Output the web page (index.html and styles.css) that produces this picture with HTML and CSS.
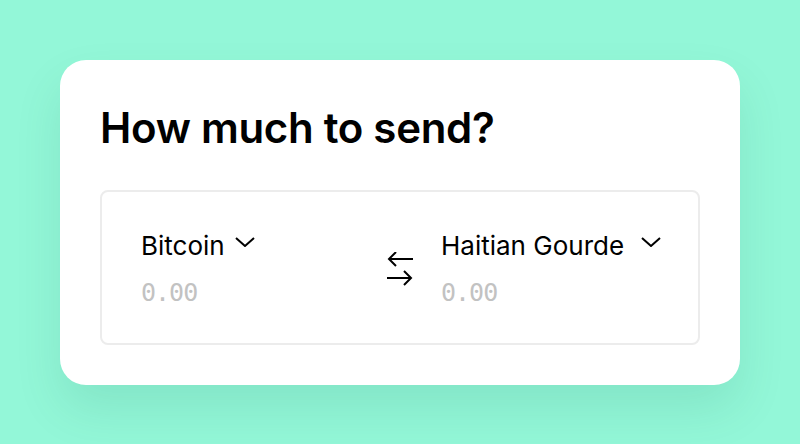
FILE: index.html
```html
<!DOCTYPE html>
<html lang="en">
<head>
<meta charset="utf-8">
<title>How much to send?</title>
<link rel="stylesheet" href="styles.css">
</head>
<body>
<main class="card">
  <h1 class="title">How much to send?</h1>
  <section class="converter">
    <div class="side">
      <div class="currency">
        <span class="currency-name">Bitcoin</span>
        <svg class="chevron chevron-tight" width="20" height="10" viewBox="0 0 20 10" fill="none" stroke="#000" stroke-width="2"><path d="M1 1l9 8 9-8"/></svg>
      </div>
      <div class="amount">0.00</div>
    </div>
    <svg class="swap" width="26" height="34" viewBox="0 0 26 34" fill="none" stroke="#000" stroke-width="2"><path d="M26 7H2M9 0L2 7l7 7M0 26h24M17 19l7 7-7 7"/></svg>
    <div class="side">
      <div class="currency">
        <span class="currency-name">Haitian Gourde</span>
        <svg class="chevron chevron-wide" width="20" height="10" viewBox="0 0 20 10" fill="none" stroke="#000" stroke-width="2"><path d="M1 1l9 8 9-8"/></svg>
      </div>
      <div class="amount">0.00</div>
    </div>
  </section>
</main>
</body>
</html>
```

FILE: styles.css
```css
html, body {
  margin: 0;
  padding: 0;
}
body {
  background: #93f7d8;
  font-family: Inter, "Noto Sans", sans-serif;
  color: #000;
  padding: 60px;
  height: 444px;
  box-sizing: border-box;
}
.card {
  background: #fff;
  border-radius: 26px;
  padding: 40px;
  box-shadow: 0 24px 48px rgba(0, 90, 60, 0.11);
}
.title {
  margin: 0;
  font-size: 42px;
  font-weight: 600;
  line-height: 56px;
  letter-spacing: -0.3px;
}
.converter {
  margin-top: 34px;
  border: 2px solid #ececec;
  border-radius: 8px;
  padding: 37px 39px 35px;
  display: grid;
  grid-template-columns: minmax(0, 1fr) auto minmax(0, 1fr);
  column-gap: 28px;
  align-items: center;
}
.side {
  min-width: 0;
}
.currency {
  display: flex;
  align-items: center;
  height: 34px;
  white-space: nowrap;
}
.currency-name {
  font-size: 26px;
  line-height: 34px;
  flex: none;
}
.chevron {
  flex: none;
  margin-bottom: 9px;
}
.chevron-tight { margin-left: 10px; }
.chevron-wide { margin-left: 17px; }
.amount {
  margin-top: 15px;
  font-family: "DejaVu Sans Mono", monospace;
  font-size: 25px;
  letter-spacing: -1px;
  line-height: 30px;
  color: #c2c2c2;
}
.swap {
  display: block;
}
```
